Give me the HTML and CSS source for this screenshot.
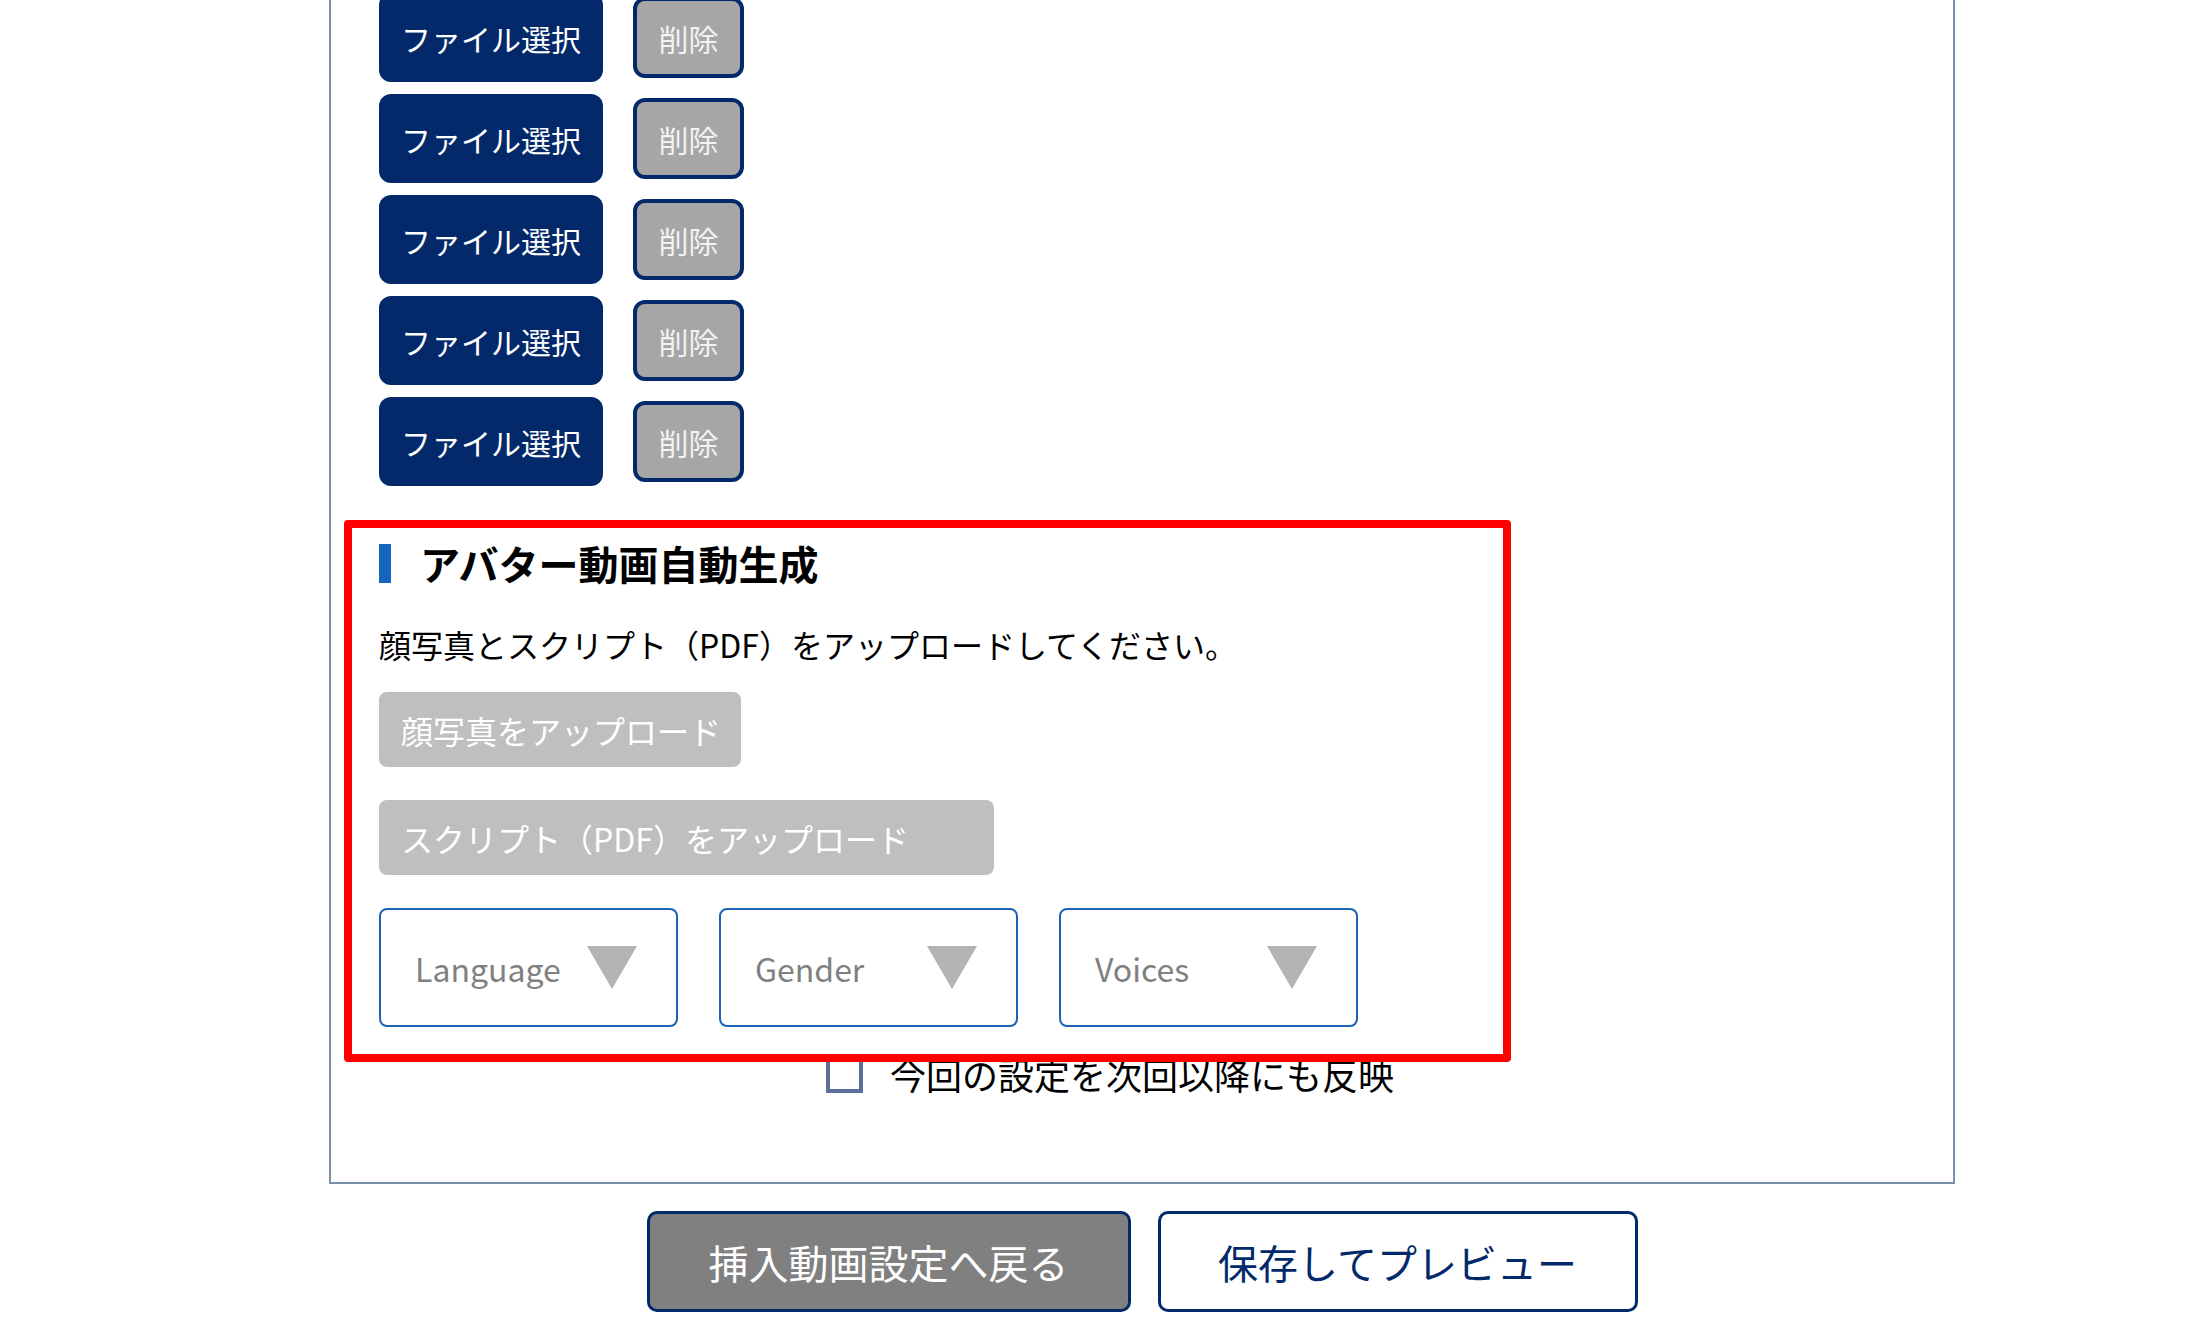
FILE: index.html
```html
<!DOCTYPE html>
<html lang="ja">
<head>
    <meta charset="UTF-8">
    <meta name="viewport" content="width=device-width, initial-scale=1.0">
    <title>アバター動画自動生成</title>
    <link rel="stylesheet" href="styles.css">
</head>
<body>

<div class="panel">
    <!-- 素材ファイル -->
    <div class="file-list">
        <div class="file-row">
            <button class="btn-file">ファイル選択</button>
            <button class="btn-delete">削除</button>
        </div>
        <div class="file-row">
            <button class="btn-file">ファイル選択</button>
            <button class="btn-delete">削除</button>
        </div>
        <div class="file-row">
            <button class="btn-file">ファイル選択</button>
            <button class="btn-delete">削除</button>
        </div>
        <div class="file-row">
            <button class="btn-file">ファイル選択</button>
            <button class="btn-delete">削除</button>
        </div>
        <div class="file-row">
            <button class="btn-file">ファイル選択</button>
            <button class="btn-delete">削除</button>
        </div>
    </div>

    <!-- アバター動画 -->
    <div class="avatar-section">
        <h3 class="section-title">アバター動画自動生成</h3>
        <p class="section-text">顔写真とスクリプト（PDF）をアップロードしてください。</p>
        <button class="btn-upload btn-photo">顔写真をアップロード</button>
        <button class="btn-upload btn-script">スクリプト（PDF）をアップロード</button>
        <div class="select-row">
            <div class="select-box"><span>Language</span><i class="arrow"></i></div>
            <div class="select-box"><span>Gender</span><i class="arrow"></i></div>
            <div class="select-box"><span>Voices</span><i class="arrow"></i></div>
        </div>
    </div>

    <label class="keep-setting">
        <span class="check"></span>
        <span>今回の設定を次回以降にも反映</span>
    </label>
</div>

<div class="actions">
    <button class="btn-back">挿入動画設定へ戻る</button>
    <button class="btn-save">保存してプレビュー</button>
</div>

</body>
</html>
```

FILE: styles.css
```css
/* 全体 */
body {
    margin: 0;
    font-family: "Noto Sans CJK JP", "Noto Sans", sans-serif;
    color: #000;
    background: #fff;
    overflow: hidden;
}
button {
    font-family: inherit;
    cursor: pointer;
}

/* 外枠 */
.panel {
    box-sizing: border-box;
    width: 1626px;
    margin-left: 329px;
    padding: 0 0 89px 13px;
    border: 2px solid #7a8fa8;
    border-top: none;
}

/* ファイル選択 */
.file-list {
    display: flex;
    flex-direction: column;
    gap: 12px;
    margin-top: -7px;
    padding-left: 35px;
}
.file-row {
    display: flex;
    align-items: center;
    gap: 30px;
}
.btn-file {
    width: 224px;
    height: 89px;
    border: none;
    border-radius: 12px;
    background-color: #03296a;
    color: #fff;
    font-size: 30px;
    line-height: 1;
}
.btn-delete {
    box-sizing: border-box;
    width: 111px;
    height: 81px;
    border: 4px solid #03296a;
    border-radius: 12px;
    background-color: #a6a6a6;
    color: #f2f2f2;
    font-size: 30px;
    line-height: 1;
}

/* アバター動画自動生成 */
.avatar-section {
    position: relative;
    z-index: 1;
    box-sizing: border-box;
    width: 1167px;
    margin-top: 34px;
    padding: 16px 27px 27px 27px;
    border: 8px solid #ff0000;
    border-radius: 4px;
}
.section-title {
    display: flex;
    align-items: center;
    gap: 29px;
    margin: 0;
    font-size: 40px;
    font-weight: bold;
    line-height: 39px;
}
.section-title::before {
    content: "";
    width: 12px;
    height: 39px;
    background-color: #1565c0;
}
.section-text {
    margin: 45px 0 0 0;
    font-size: 32px;
    line-height: 32px;
}
.btn-upload {
    display: block;
    box-sizing: border-box;
    height: 75px;
    padding: 0 0 0 22px;
    border: none;
    border-radius: 8px;
    background-color: #bfbfbf;
    color: #fff;
    font-size: 32px;
    text-align: left;
    line-height: 1;
}
.btn-photo {
    width: 362px;
    margin-top: 32px;
}
.btn-script {
    width: 615px;
    margin-top: 33px;
}
.select-row {
    display: flex;
    gap: 41px;
    margin-top: 33px;
}
.select-box {
    box-sizing: border-box;
    display: flex;
    align-items: center;
    justify-content: space-between;
    width: 299px;
    height: 119px;
    padding: 0 39px 0 34px;
    border: 2px solid #1a64b8;
    border-radius: 8px;
    color: #808080;
    font-size: 32px;
}
.arrow {
    width: 0;
    height: 0;
    border-left: 25px solid transparent;
    border-right: 25px solid transparent;
    border-top: 43px solid #b3b3b3;
}

/* 次回以降にも反映 */
.keep-setting {
    display: flex;
    align-items: center;
    gap: 27px;
    margin: -6px 0 0 482px;
    font-size: 36px;
    line-height: 37px;
}
.check {
    box-sizing: border-box;
    width: 37px;
    height: 37px;
    border: 4px solid #5b7099;
}

/* 下部ボタン */
.actions {
    display: flex;
    justify-content: center;
    gap: 27px;
    width: 1626px;
    margin: 27px 0 0 329px;
}
.btn-back,
.btn-save {
    height: 101px;
    border: 3px solid #03296a;
    border-radius: 10px;
    font-size: 40px;
    line-height: 1;
}
.btn-back {
    width: 484px;
    background-color: #808080;
    color: #fff;
}
.btn-save {
    width: 480px;
    background-color: #fff;
    color: #03296a;
}
```
